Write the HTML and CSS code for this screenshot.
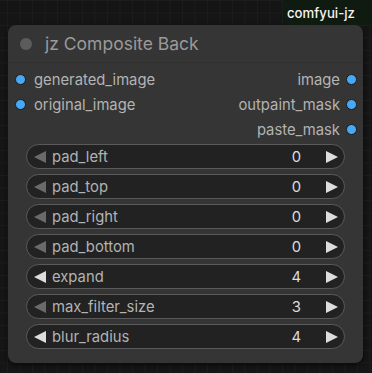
FILE: index.html
```html
<!DOCTYPE html>
<html>
<head>
<meta charset="utf-8">
<link rel="stylesheet" href="styles.css">
</head>
<body>
<div class="badge">comfyui-jz</div>
<div class="node">
  <div class="title">
    <span class="title-dot"></span>
    <span class="title-text">jz Composite Back</span>
  </div>
  <div class="slots">
    <div class="slot-row">
      <div class="slot in"><span class="dot"></span><span>generated_image</span></div>
      <div class="slot out"><span>image</span><span class="dot"></span></div>
    </div>
    <div class="slot-row">
      <div class="slot in"><span class="dot"></span><span>original_image</span></div>
      <div class="slot out"><span>outpaint_mask</span><span class="dot"></span></div>
    </div>
    <div class="slot-row">
      <div class="slot in"></div>
      <div class="slot out"><span>paste_mask</span><span class="dot"></span></div>
    </div>
  </div>
  <div class="widgets">
    <div class="widget"><span class="arrow left dim"></span><span class="wlabel">pad_left</span><span class="wval">0</span><span class="arrow right"></span></div>
    <div class="widget"><span class="arrow left dim"></span><span class="wlabel">pad_top</span><span class="wval">0</span><span class="arrow right"></span></div>
    <div class="widget"><span class="arrow left dim"></span><span class="wlabel">pad_right</span><span class="wval">0</span><span class="arrow right"></span></div>
    <div class="widget"><span class="arrow left dim"></span><span class="wlabel">pad_bottom</span><span class="wval">0</span><span class="arrow right"></span></div>
    <div class="widget"><span class="arrow left"></span><span class="wlabel">expand</span><span class="wval">4</span><span class="arrow right"></span></div>
    <div class="widget"><span class="arrow left dim"></span><span class="wlabel">max_filter_size</span><span class="wval">3</span><span class="arrow right"></span></div>
    <div class="widget"><span class="arrow left"></span><span class="wlabel">blur_radius</span><span class="wval">4</span><span class="arrow right"></span></div>
  </div>
</div>
</body>
</html>
```
FILE: styles.css
```css
html, body {
  margin: 0;
  padding: 0;
}
body {
  width: 372px;
  height: 373px;
  overflow: hidden;
  position: relative;
  font-family: Inter, "Noto Sans", sans-serif;
  background-color: #151515;
  background-image:
    linear-gradient(to right, #1c1c1c 1px, transparent 1px),
    linear-gradient(to bottom, #1c1c1c 1px, transparent 1px);
  background-size: 12.5px 12.5px;
  background-position: 7px 0;
  padding-top: 25px;
  box-sizing: border-box;
}
.badge {
  position: absolute;
  top: 0;
  right: 0;
  width: 89px;
  height: 25px;
  background: #0f1a10;
  color: #f4f4f4;
  font-size: 13.2px;
  font-weight: 500;
  display: flex;
  align-items: center;
  border-bottom-left-radius: 8px;
  box-sizing: border-box;
  padding-left: 4px;
}
.node {
  margin-left: 8px;
  width: 355px;
  height: 338px;
  background: #353535;
  border-radius: 8px;
  box-shadow: 0 2px 4px rgba(0,0,0,0.6);
  box-sizing: border-box;
  display: flex;
  flex-direction: column;
}
.title {
  height: 38px;
  display: flex;
  align-items: center;
  border-bottom: 1px solid #2f2f2f;
  box-sizing: border-box;
  padding-left: 12px;
}
.title-dot {
  width: 12px;
  height: 12px;
  border-radius: 50%;
  background: #5c5c5c;
}
.title-text {
  margin-left: 13px;
  color: #9a9a9a;
  font-size: 17.5px;
}
.slots {
  padding-top: 4px;
  display: flex;
  flex-direction: column;
}
.slot-row {
  height: 25px;
  display: flex;
  justify-content: space-between;
  align-items: center;
}
.slot {
  display: flex;
  align-items: center;
  color: #b3b3b3;
  font-size: 14.8px;
}
.slot.in {
  padding-left: 7px;
  gap: 8px;
}
.slot.out {
  padding-right: 6px;
  gap: 6px;
}
.dot {
  width: 9px;
  height: 9px;
  border-radius: 50%;
  background: #48a8f5;
  border: 1px solid #1a1a1a;
}
.widgets {
  padding: 2px 18px 0 18px;
  display: flex;
  flex-direction: column;
  gap: 5px;
}
.widget {
  height: 25px;
  box-sizing: border-box;
  border: 1px solid #5a5a5a;
  border-radius: 13px;
  background: #222222;
  display: flex;
  align-items: center;
  padding: 0 6px 0 7px;
  font-size: 14.8px;
}
.arrow {
  width: 0;
  height: 0;
  border-top: 6px solid transparent;
  border-bottom: 6px solid transparent;
}
.arrow.left {
  border-right: 12px solid #dddddd;
}
.arrow.left.dim {
  border-right-color: #6a6a6a;
}
.arrow.right {
  border-left: 12px solid #dddddd;
}
.wlabel {
  margin-left: 6px;
  color: #b3b3b3;
  flex: 1;
}
.wval {
  color: #dcdcdc;
  margin-right: 25px;
}
```
